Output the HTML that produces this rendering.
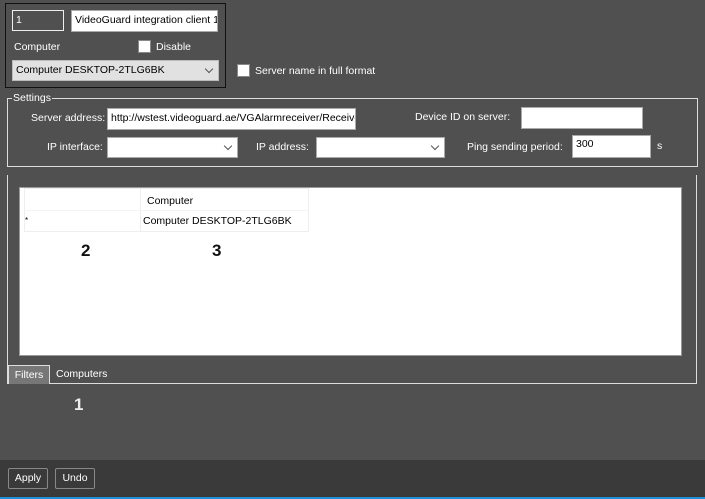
<!DOCTYPE html>
<html><head><style>
body{margin:0;width:705px;height:499px;background:#505050;position:relative;overflow:hidden;font-family:"Liberation Sans",sans-serif;font-size:10.5px;color:#fff}
div,span{position:absolute;box-sizing:border-box}
.lbl{white-space:nowrap;line-height:13px}
.inp{background:#fff;border:1px solid #aaa;color:#000;padding:1px 3px;white-space:nowrap;overflow:hidden;line-height:16px}
.cb{width:13px;height:13px;background:#fff;border:1px solid #888}
.arr{position:absolute;right:6px;top:5px;width:5px;height:5px;border-right:1px solid #555;border-bottom:1px solid #555;transform:rotate(45deg)}
.btn{border:1px solid #888;border-radius:2px;background:#3a3a3a;text-align:center;line-height:19px;color:#fff}
</style></head><body>
<div style="left:5px;top:3px;width:221px;height:85px;border:1px solid #111"></div>
<div style="left:12px;top:10px;width:52px;height:21px;border:1px solid #eee;padding:1px 3px;line-height:16px">1</div>
<div class="inp" style="left:71px;top:10px;width:147px;height:22px">VideoGuard integration client 1</div>
<div class="lbl" style="left:14px;top:41px">Computer</div>
<div class="cb" style="left:138px;top:40px"></div>
<div class="lbl" style="left:156px;top:41px">Disable</div>
<div class="inp" style="left:12px;top:60px;width:207px;height:21px;background:#e1e1e1;border-color:#bbb">Computer DESKTOP-2TLG6BK<i class="arr" style="top:5px"></i></div>
<div class="cb" style="left:237px;top:64px"></div>
<div class="lbl" style="left:255px;top:65px">Server name in full format</div>

<div style="left:7px;top:98px;width:691px;height:69px;border:1px solid #ddd"></div>
<div class="lbl" style="left:12px;top:92px;background:#505050;padding:0 1px">Settings</div>
<div class="lbl" style="left:31px;top:112px">Server address:</div>
<div class="inp" style="left:107px;top:108px;width:249px;height:22px">http://wstest.videoguard.ae/VGAlarmreceiver/Receive</div>
<div class="lbl" style="left:415px;top:111px">Device ID on server:</div>
<div class="inp" style="left:521px;top:107px;width:122px;height:22px"></div>
<div class="lbl" style="left:47px;top:141px">IP interface:</div>
<div class="inp" style="left:107px;top:137px;width:131px;height:21px"><i class="arr"></i></div>
<div class="lbl" style="left:256px;top:141px">IP address:</div>
<div class="inp" style="left:316px;top:137px;width:129px;height:21px"><i class="arr"></i></div>
<div class="lbl" style="left:467px;top:141px">Ping sending period:</div>
<div class="inp" style="left:572px;top:135px;width:79px;height:23px;padding-top:0">300</div>
<div class="lbl" style="left:657px;top:140px">s</div>

<div style="left:7px;top:175px;width:1px;height:209px;background:#ddd"></div>
<div style="left:696px;top:175px;width:1px;height:209px;background:#ddd"></div>
<div style="left:7px;top:383px;width:690px;height:1px;background:#ddd"></div>
<div style="left:19px;top:187px;width:663px;height:169px;background:#fff;border:1px solid #999"></div>
<div style="left:24px;top:188px;width:285px;height:44px;border:1px solid #eee"></div>
<div style="left:140px;top:188px;width:1px;height:44px;background:#eee"></div>
<div style="left:24px;top:210px;width:285px;height:1px;background:#f4f4f4"></div>
<div class="lbl" style="left:147px;top:195px;color:#000">Computer</div>
<div class="lbl" style="left:25px;top:217px;color:#000;font-size:8px;line-height:8px">*</div>
<div class="lbl" style="left:143px;top:215px;color:#000">Computer DESKTOP-2TLG6BK</div>
<div class="lbl" style="left:81px;top:242px;color:#111;font-weight:bold;font-size:17px;line-height:18px">2</div>
<div class="lbl" style="left:212px;top:242px;color:#111;font-weight:bold;font-size:17px;line-height:18px">3</div>
<div style="left:8px;top:365px;width:42px;height:19px;background:#777;border:1px solid #ddd;border-bottom:none;text-align:center;line-height:18px">Filters</div>
<div class="lbl" style="left:56px;top:368px">Computers</div>
<div class="lbl" style="left:74px;top:396px;color:#eee;font-weight:bold;font-size:17px;line-height:18px">1</div>

<div style="left:0;top:460px;width:705px;height:39px;background:#3a3a3a"></div>
<div class="btn" style="left:8px;top:468px;width:40px;height:21px">Apply</div>
<div class="btn" style="left:55px;top:468px;width:40px;height:21px">Undo</div>
<div style="left:0;top:497px;width:705px;height:2px;background:#1e90d8"></div>
</body></html>
